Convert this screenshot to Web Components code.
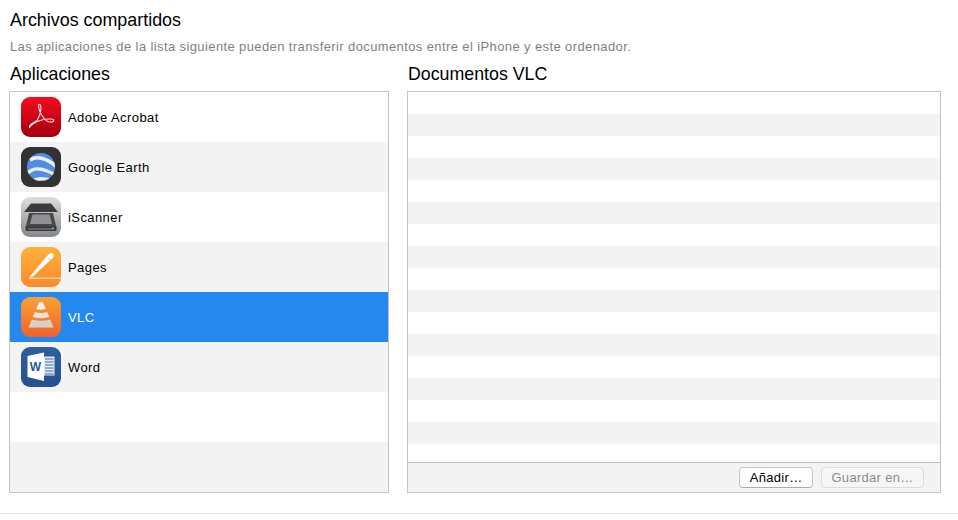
<!DOCTYPE html>
<html lang="es">
<head>
<meta charset="utf-8">
<title>Archivos compartidos</title>
<style>
  html, body { margin: 0; padding: 0; background: #fff; }
  body { font-family: "Liberation Sans", Arial, sans-serif; }
</style>
</head>
<body>
<file-sharing>
  <list-panel slot="left" heading="Aplicaciones">
    <app-list>
      <app-row icon="acrobat">Adobe Acrobat</app-row>
      <app-row icon="earth">Google Earth</app-row>
      <app-row icon="iscanner">iScanner</app-row>
      <app-row icon="pages">Pages</app-row>
      <app-row icon="vlc" selected>VLC</app-row>
      <app-row icon="word">Word</app-row>
      <app-row></app-row>
      <app-row></app-row>
    </app-list>
  </list-panel>
  <list-panel slot="right" heading="Documentos VLC">
    <doc-list>
      <push-button>Añadir…</push-button>
      <push-button disabled>Guardar en…</push-button>
    </doc-list>
  </list-panel>
</file-sharing>

<script>
/* icons are drawn on a 40x40 box */
const ICONS = {
  acrobat: `
    <defs><linearGradient id="g" x1="0" y1="0" x2="0" y2="1">
      <stop offset="0" stop-color="#f70a1e"/><stop offset="1" stop-color="#a3000e"/></linearGradient></defs>
    <rect width="40" height="40" rx="9" fill="url(#g)"/>
    <path d="M8.5 30.5C7.3 28.5 12.5 25.5 16 23.5C18.5 19 20.5 14 19.8 9.5C19.3 6.5 17.3 6.5 17.5 9C17.9 15 22 21.5 26 24C29 25.8 33.4 25 32.6 23C32 21.4 25 22 20 23.2C15 24.4 10 28 8.5 30.5Z"
      fill="none" stroke="#f7dede" stroke-width="1.1" stroke-linejoin="round"/>`,
  earth: `
    <defs><clipPath id="c"><circle cx="20" cy="20" r="14"/></clipPath></defs>
    <rect width="40" height="40" rx="9" fill="#323232"/>
    <circle cx="20" cy="20" r="14" fill="#4f8de6"/>
    <g clip-path="url(#c)" fill="none" stroke="#eceef2">
      <path d="M9 13C16 8.5 26 11 36 20" stroke-width="3.6"/>
      <path d="M5 28C11 20 20 19 36 29" stroke-width="3.4"/>
      <path d="M10 35C18 30 25 31 33 35" stroke-width="3.4"/>
    </g>`,
  iscanner: `
    <defs><linearGradient id="g" x1="0" y1="0" x2="0" y2="1">
      <stop offset="0" stop-color="#dedede"/><stop offset="1" stop-color="#85878a"/></linearGradient></defs>
    <rect width="40" height="40" rx="9" fill="url(#g)"/>
    <path d="M10 6.5H30L37 15H3Z" fill="#3b3b3d"/>
    <path d="M8 16H32L35 29H5Z" fill="#48484b"/>
    <path d="M11.5 17.5H28.5L31 27H9Z" fill="#909193"/>
    <path d="M4.5 29H35.5V33Q35.5 34 34.5 34H5.5Q4.5 34 4.5 33Z" fill="#3b3b3d"/>
    <rect x="7" y="31.5" width="24" height="1" fill="#8a8a8c"/>
    <rect x="31" y="30.6" width="2" height="1.6" fill="#3fd0d8"/>`,
  pages: `
    <defs><linearGradient id="g" x1="0" y1="0" x2="0" y2="1">
      <stop offset="0" stop-color="#ffb03c"/><stop offset="1" stop-color="#fa8a2c"/></linearGradient></defs>
    <rect width="40" height="40" rx="9" fill="url(#g)"/>
    <path d="M8.5 30L25.5 9.5L28 7Q30 5.2 31.8 6.6Q33.4 8.2 32 10.4L29.5 13L12 29.5Z" fill="#fff"/>
    <path d="M26.5 10.5L29.5 13.5" stroke="#fbb45f" stroke-width=".8"/>
    <rect x="8" y="30.6" width="32" height="1.1" fill="#ffe6c4"/>`,
  vlc: `
    <defs><linearGradient id="g" x1="0" y1="0" x2="0" y2="1">
      <stop offset="0" stop-color="#f9a135"/><stop offset="1" stop-color="#f1622b"/></linearGradient></defs>
    <rect width="40" height="40" rx="9" fill="url(#g)"/>
    <path d="M18 5.5Q20 4.5 22 5.5L24.8 12Q20 13.5 15.2 12Z" fill="#f5f0ea"/>
    <path d="M13.9 15Q20 17 26.1 15L28.2 20Q20 22.5 11.8 20Z" fill="#e8e2da"/>
    <path d="M10.8 22.5Q20 25 29.2 22.5L32.5 30.5H7.5Z" fill="#d5d2cc"/>`,
  word: `
    <defs><linearGradient id="g" x1="0" y1="0" x2="0" y2="1">
      <stop offset="0" stop-color="#2f5f9f"/><stop offset="1" stop-color="#26508f"/></linearGradient></defs>
    <rect width="40" height="40" rx="9" fill="url(#g)"/>
    <path d="M23 5.5V34L6.5 30V9Z" fill="#fff"/>
    <rect x="23" y="9.5" width="10.5" height="19" fill="#e4ebf4"/>
    <path d="M24 12H32.5M24 15H32.5M24 18H32.5M24 21H32.5M24 24H32.5M24 27H32.5" stroke="#3f6aa6" stroke-width="1.2"/>
    <text x="14.6" y="24" text-anchor="middle" font-family="Liberation Sans, sans-serif" font-weight="700" font-size="12" fill="#2b5797">W</text>`,
};

class FileSharing extends HTMLElement {
  connectedCallback() {
    this.attachShadow({ mode: "open" });
    this.shadowRoot.innerHTML = `
      <style>
        :host {
          display: flex;
          flex-direction: column;
          height: 520px;
          box-sizing: border-box;
          padding: 11px 0 0;
          color: #000;
        }
        h1 {
          margin: 0 0 0 10px;
          font-size: 17.9px;
          line-height: 19px;
          font-weight: 400;
        }
        p {
          margin: 9px 0 0 10px;
          font-size: 13px;
          line-height: 15px;
          color: #7f7f7f;
          letter-spacing: 0.39px;
          white-space: nowrap;
        }
        .columns {
          display: flex;
          gap: 18px;
          margin: 10px 17px 0 9px;
        }
        ::slotted([slot="left"]) { width: 380px; flex: none; }
        ::slotted([slot="right"]) { flex: 1; }
        hr {
          margin: 20px 0 0;
          border: 0;
          border-top: 1px solid #e2e2e2;
        }
      </style>
      <h1>Archivos compartidos</h1>
      <p>Las aplicaciones de la lista siguiente pueden transferir documentos entre el iPhone y este ordenador.</p>
      <div class="columns">
        <slot name="left"></slot>
        <slot name="right"></slot>
      </div>
      <hr>
    `;
  }
}

class ListPanel extends HTMLElement {
  connectedCallback() {
    this.attachShadow({ mode: "open" });
    this.shadowRoot.innerHTML = `
      <style>
        :host { display: block; }
        h2 {
          margin: 0 0 0 1px;
          font-size: 17.8px;
          line-height: 20px;
          height: 27px;
          font-weight: 400;
        }
        .box {
          height: 400px;
          border: 1px solid #c4c4c4;
          background: #fff;
        }
      </style>
      <h2></h2>
      <div class="box"><slot></slot></div>
    `;
    this.shadowRoot.querySelector("h2").textContent = this.getAttribute("heading");
  }
}

class AppList extends HTMLElement {
  connectedCallback() {
    this.attachShadow({ mode: "open" });
    this.shadowRoot.innerHTML = `
      <style>
        :host { display: flex; flex-direction: column; height: 100%; }
        ::slotted(app-row:nth-child(even)) { background: #f3f3f3; }
        ::slotted(app-row[selected]) { background: #2588ee; color: #fff; }
      </style>
      <slot></slot>
    `;
  }
}

class AppRow extends HTMLElement {
  connectedCallback() {
    this.attachShadow({ mode: "open" });
    const icon = ICONS[this.getAttribute("icon")];
    this.shadowRoot.innerHTML = `
      <style>
        :host {
          display: flex;
          align-items: center;
          gap: 7px;
          height: 50px;
          padding-left: 11px;
          font-size: 13px;
          letter-spacing: 0.42px;
        }
        svg { width: 40px; height: 40px; flex: none; display: block; }
      </style>
      ${icon ? `<svg viewBox="0 0 40 40">${icon}</svg>` : ""}
      <slot></slot>
    `;
  }
}

class DocList extends HTMLElement {
  connectedCallback() {
    this.attachShadow({ mode: "open" });
    this.shadowRoot.innerHTML = `
      <style>
        :host { display: flex; flex-direction: column; height: 100%; }
        .rows {
          flex: 1;
          background: repeating-linear-gradient(#fff 0 22px, #f3f3f3 22px 44px);
        }
        .bar {
          height: 29px;
          flex: none;
          border-top: 1px solid #c4c4c4;
          background: #f3f3f3;
          display: flex;
          justify-content: flex-end;
          align-items: center;
          gap: 8px;
          padding-right: 16px;
        }
      </style>
      <div class="rows"></div>
      <div class="bar"><slot></slot></div>
    `;
  }
}

class PushButton extends HTMLElement {
  connectedCallback() {
    this.attachShadow({ mode: "open" });
    this.shadowRoot.innerHTML = `
      <style>
        :host {
          display: flex;
          align-items: center;
          justify-content: center;
          box-sizing: border-box;
          height: 21px;
          padding: 0 9.5px;
          border: 1px solid #c6c6c6;
          border-bottom-color: #adadad;
          border-radius: 4px;
          background: #fff;
          color: #000;
          font-size: 13px;
          letter-spacing: 0.3px;
        }
        :host([disabled]) {
          background: #f6f6f6;
          border-color: #dcdcdc;
          color: #8c8c8c;
        }
      </style>
      <slot></slot>
    `;
  }
}

customElements.define("file-sharing", FileSharing);
customElements.define("list-panel", ListPanel);
customElements.define("app-list", AppList);
customElements.define("app-row", AppRow);
customElements.define("doc-list", DocList);
customElements.define("push-button", PushButton);
</script>
</body>
</html>
